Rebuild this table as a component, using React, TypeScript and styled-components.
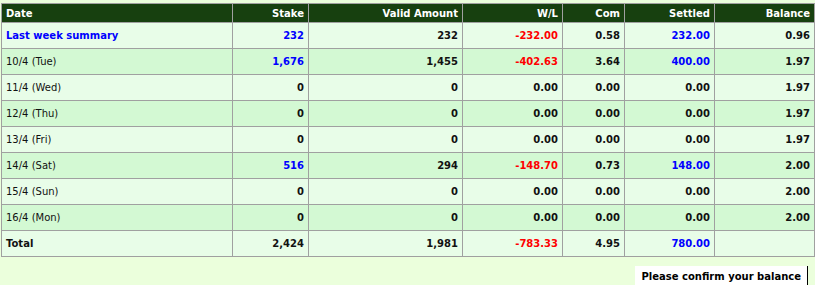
import React from 'react';
import styled, { createGlobalStyle } from 'styled-components';

const GlobalStyle = createGlobalStyle`
  html, body {
    margin: 0;
    padding: 0;
    background: #ebffdc;
    font-family: "DejaVu Sans", Verdana, sans-serif;
    font-size: 10px;
  }
`;

const Page = styled.div`
  padding: 3px 0 0 1px;
  display: flex;
  flex-direction: column;
  align-items: flex-start;
`;

const Table = styled.table`
  width: 813px;
  border-collapse: collapse;
  table-layout: fixed;
  border: 1px solid #a0a0a0;
`;

const HeadCell = styled.th<{ $left?: boolean }>`
  background: #17400f;
  color: #ffffff;
  font-weight: bold;
  height: 18px;
  padding: 0 4px;
  text-align: ${p => (p.$left ? 'left' : 'right')};
  border: 1px solid #a0a0a0;
  white-space: nowrap;
`;

const Row = styled.tr<{ $alt?: boolean }>`
  background: ${p => (p.$alt ? '#d3f9d3' : '#e8fde8')};
`;

type Tone = 'blue' | 'red' | 'black';

const Cell = styled.td<{ $tone?: Tone; $left?: boolean; $bold?: boolean }>`
  height: 25px;
  padding: 0 4px;
  border: 1px solid #a0a0a0;
  text-align: ${p => (p.$left ? 'left' : 'right')};
  font-weight: ${p => (p.$bold ? 'bold' : 'normal')};
  color: ${p => (p.$tone === 'blue' ? '#0000ff' : p.$tone === 'red' ? '#ff0000' : '#111111')};
  white-space: nowrap;
`;

const Footer = styled.div`
  align-self: flex-end;
  margin: 9px 7px 0 0;
  background: #ffffff;
  border-right: 1px solid #000000;
  padding: 0 6px 0 7px;
  height: 20px;
  display: flex;
  align-items: center;
  font-weight: bold;
  color: #000000;
`;

const widths = [231, 76, 154, 100, 62, 90, 100];
const heads = ['Date', 'Stake', 'Valid Amount', 'W/L', 'Com', 'Settled', 'Balance'];

interface Line {
  date: string;
  stake: string;
  valid: string;
  wl: string;
  com: string;
  settled: string;
  balance: string;
}

const lines: Line[] = [
  { date: 'Last week summary', stake: '232', valid: '232', wl: '-232.00', com: '0.58', settled: '232.00', balance: '0.96' },
  { date: '10/4 (Tue)', stake: '1,676', valid: '1,455', wl: '-402.63', com: '3.64', settled: '400.00', balance: '1.97' },
  { date: '11/4 (Wed)', stake: '0', valid: '0', wl: '0.00', com: '0.00', settled: '0.00', balance: '1.97' },
  { date: '12/4 (Thu)', stake: '0', valid: '0', wl: '0.00', com: '0.00', settled: '0.00', balance: '1.97' },
  { date: '13/4 (Fri)', stake: '0', valid: '0', wl: '0.00', com: '0.00', settled: '0.00', balance: '1.97' },
  { date: '14/4 (Sat)', stake: '516', valid: '294', wl: '-148.70', com: '0.73', settled: '148.00', balance: '2.00' },
  { date: '15/4 (Sun)', stake: '0', valid: '0', wl: '0.00', com: '0.00', settled: '0.00', balance: '2.00' },
  { date: '16/4 (Mon)', stake: '0', valid: '0', wl: '0.00', com: '0.00', settled: '0.00', balance: '2.00' },
];

const total: Line = { date: 'Total', stake: '2,424', valid: '1,981', wl: '-783.33', com: '4.95', settled: '780.00', balance: '' };

const isZero = (v: string) => parseFloat(v.replace(/,/g, '')) === 0;

export default function App() {
  return (
    <>
      <GlobalStyle />
      <Page>
        <Table>
          <colgroup>
            {widths.map((w, i) => (
              <col key={i} style={{ width: w }} />
            ))}
          </colgroup>
          <thead>
            <tr>
              {heads.map((h, i) => (
                <HeadCell key={h} $left={i === 0}>{h}</HeadCell>
              ))}
            </tr>
          </thead>
          <tbody>
            {lines.map((l, i) => (
              <Row key={l.date} $alt={i % 2 === 1}>
                {i === 0 ? (
                  <Cell $left $bold $tone="blue">{l.date}</Cell>
                ) : (
                  <Cell $left>{l.date}</Cell>
                )}
                <Cell $bold $tone={isZero(l.stake) ? 'black' : 'blue'}>{l.stake}</Cell>
                <Cell $bold>{l.valid}</Cell>
                <Cell $bold $tone={l.wl.startsWith('-') ? 'red' : 'black'}>{l.wl}</Cell>
                <Cell $bold>{l.com}</Cell>
                <Cell $bold $tone={isZero(l.settled) ? 'black' : 'blue'}>{l.settled}</Cell>
                <Cell $bold>{l.balance}</Cell>
              </Row>
            ))}
            <Row>
              <Cell $left $bold>{total.date}</Cell>
              <Cell $bold>{total.stake}</Cell>
              <Cell $bold>{total.valid}</Cell>
              <Cell $bold $tone="red">{total.wl}</Cell>
              <Cell $bold>{total.com}</Cell>
              <Cell $bold $tone="blue">{total.settled}</Cell>
              <Cell $bold>{total.balance}</Cell>
            </Row>
          </tbody>
        </Table>
        <Footer>Please confirm your balance</Footer>
      </Page>
    </>
  );
}
